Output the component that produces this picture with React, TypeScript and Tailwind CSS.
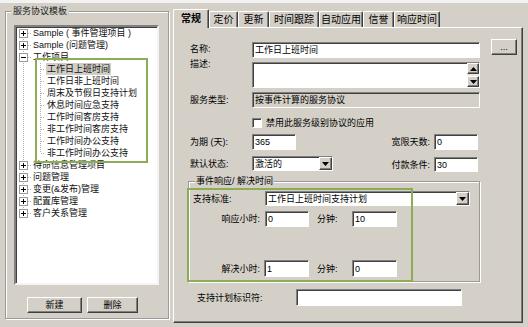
import React from "react";

const sunken =
  "border border-t-[#808080] border-l-[#808080] border-r-white border-b-white shadow-[inset_1px_1px_0_#404040]";
const raised =
  "border border-t-white border-l-white border-r-[#404040] border-b-[#404040] shadow-[inset_-1px_-1px_0_#808080]";
const etched = "border border-[#9a9a9a] shadow-[inset_1px_1px_0_#fff,1px_1px_0_#fff]";

function Field({ w, h, value = "", gray = false }: { w: number; h: number; value?: string; gray?: boolean }) {
  return (
    <div
      className={`${sunken} ${gray ? "bg-[#d4d0c8]" : "bg-white"} flex items-center pl-[2px] leading-[12px] overflow-hidden whitespace-nowrap`}
      style={{ width: w, height: h }}
    >
      {value}
    </div>
  );
}

function Arrow({ up = false }: { up?: boolean }) {
  return (
    <svg width="7" height="4" viewBox="0 0 7 4">
      <path d={up ? "M0 4 L3.5 0 L7 4 Z" : "M0 0 L7 0 L3.5 4 Z"} fill="#000" />
    </svg>
  );
}

function Select({ w, h, value }: { w: number; h: number; value: string }) {
  return (
    <div className={`${sunken} bg-white flex items-center`} style={{ width: w, height: h }}>
      <span className="pl-[2px] flex-1 leading-[12px] whitespace-nowrap overflow-hidden">{value}</span>
      <div className={`${raised} bg-[#d4d0c8] w-[13px] h-full flex items-center justify-center`}>
        <Arrow />
      </div>
    </div>
  );
}

type Node = { label: string; open?: boolean; children?: string[] };

const tree: Node[] = [
  { label: "Sample ( 事件管理项目 )" },
  { label: "Sample (问题管理)" },
  {
    label: "工作项目",
    open: true,
    children: [
      "工作日上班时间",
      "工作日非上班时间",
      "周末及节假日支持计划",
      "休息时间应急支持",
      "工作时间客房支持",
      "非工作时间客房支持",
      "工作时间办公支持",
      "非工作时间办公支持",
    ],
  },
  { label: "待命信息管理项目" },
  { label: "问题管理" },
  { label: "变更(&发布)管理" },
  { label: "配置库管理" },
  { label: "客户关系管理" },
];

const dot = { stroke: "#b0b0b0", strokeWidth: 1, strokeDasharray: "1 1" };

function RootLines({ first, last, open }: { first: boolean; last: boolean; open?: boolean }) {
  return (
    <svg width="17" height="12" viewBox="0 0 17 12" className="shrink-0">
      <line x1="7.5" y1={first ? 6 : 0} x2="7.5" y2={last ? 6 : 12} {...dot} />
      <line x1="12" y1="6.5" x2="16" y2="6.5" {...dot} />
      <rect x="3.5" y="2.5" width="8" height="8" fill="#fff" stroke="#9a9a9a" />
      <line x1="5" y1="6.5" x2="10" y2="6.5" stroke="#000" />
      {!open && <line x1="7.5" y1="4" x2="7.5" y2="9" stroke="#000" />}
    </svg>
  );
}

function ChildLines({ last }: { last: boolean }) {
  return (
    <svg width="30" height="12" viewBox="0 0 30 12" className="shrink-0">
      <line x1="7.5" y1="0" x2="7.5" y2="12" {...dot} />
      <line x1="24.5" y1="0" x2="24.5" y2={last ? 6 : 12} {...dot} />
      <line x1="25" y1="6.5" x2="29" y2="6.5" {...dot} />
    </svg>
  );
}

function Tree() {
  return (
    <div className="flex flex-col">
      {tree.map((n, i) => (
        <React.Fragment key={n.label}>
          <div className="flex items-center h-[12px]">
            <RootLines first={i === 0} last={i === tree.length - 1} open={n.open} />
            <span className="leading-[12px] whitespace-nowrap text-[#111]">{n.label}</span>
          </div>
          {n.children?.map((c, j) => (
            <div key={c} className="flex items-center h-[12px]">
              <ChildLines last={j === n.children!.length - 1} />
              <span className={`leading-[12px] whitespace-nowrap px-[1px] text-[#111] ${j === 0 ? "bg-[#d0cdc6]" : ""}`}>
                {c}
              </span>
            </div>
          ))}
        </React.Fragment>
      ))}
    </div>
  );
}

const tabs = [
  { label: "常规", w: 36 },
  { label: "定价", w: 29 },
  { label: "更新", w: 31 },
  { label: "时间跟踪", w: 50 },
  { label: "自动应用", w: 44 },
  { label: "信誉", w: 31 },
  { label: "响应时间", w: 46 },
];

export default function App() {
  return (
    <div className="w-[528px] h-[327px] bg-[#d4d0c8] text-[9px] text-black relative overflow-hidden font-[family-name:'Liberation_Sans','Noto_Sans_CJK_SC',sans-serif]">
      <div className="h-[3px] bg-[#f2f2f2]" />
      <div className="flex">
        {/* left: template tree */}
        <div className={`relative ml-[5px] mt-[8px] w-[164px] h-[308px] ${etched}`}>
          <span className="absolute -top-[7px] left-[5px] px-[2px] bg-[#d4d0c8] leading-[12px] text-[#222]">服务协议模板</span>
          <div className="ml-[8px] mt-[13px] w-[145px] h-[260px] bg-white border-2 border-t-[#808080] border-l-[#808080] border-r-[#f4f4f4] border-b-[#f4f4f4] shadow-[inset_1px_1px_0_#404040] overflow-hidden">
            <Tree />
          </div>
          <div className="flex ml-[21px] mt-[12px] gap-[5px]">
            <button className={`${raised} bg-[#d4d0c8] w-[55px] h-[16px] leading-[12px] text-[9px]`}>新建</button>
            <button className={`${raised} bg-[#d4d0c8] w-[51px] h-[16px] leading-[12px] text-[9px]`}>删除</button>
          </div>
        </div>

        {/* right: tabs */}
        <div className="ml-[4px] mt-[6px] w-[350px]">
          <div className="flex items-start h-[18px] text-[10px]">
            {tabs.map((t, i) => (
              <div
                key={t.label}
                className={`flex items-center justify-center leading-[12px] rounded-t-[2px] border-t border-l border-r border-t-white border-l-white border-r-[#404040] shadow-[inset_-1px_0_0_#808080] bg-[#d4d0c8] ${
                  i === 0 ? "h-[19px] relative z-10 font-semibold" : "h-[16px] mt-[2px]"
                }`}
                style={{ width: t.w }}
              >
                {t.label}
              </div>
            ))}
          </div>
          <div className={`relative h-[296px] ${raised} bg-[#d4d0c8] pl-[16px] flex flex-col`}>
            {/* 名称 */}
            <div className="flex items-start mt-[11px] h-[19px]">
              <span className="w-[62px] mt-[4px] leading-[12px]">名称:</span>
              <div className="mt-[3px]">
                <Field w={228} h={16} value="工作日上班时间" />
              </div>
              <button className={`${raised} bg-[#d4d0c8] ml-[11px] w-[26px] h-[16px] leading-[10px] text-[9px]`}>...</button>
            </div>
            {/* 描述 */}
            <div className="flex items-start -mt-[1px] h-[31px]">
              <span className="w-[62px] mt-[1px] leading-[12px]">描述:</span>
              <div className={`${sunken} bg-white mt-[5px] w-[228px] h-[26px] flex justify-end`}>
                <div className="w-[12px] h-full flex flex-col">
                  <div className={`${raised} bg-[#d4d0c8] h-[11px] flex items-center justify-center`}>
                    <Arrow up />
                  </div>
                  <div className="flex-1 bg-[#ece9e4]" />
                  <div className={`${raised} bg-[#d4d0c8] h-[11px] flex items-center justify-center`}>
                    <Arrow />
                  </div>
                </div>
              </div>
            </div>
            {/* 服务类型 */}
            <div className="flex items-center mt-[4px] h-[16px]">
              <span className="w-[62px] leading-[12px]">服务类型:</span>
              <Field w={228} h={16} value="按事件计算的服务协议" gray />
            </div>
            {/* checkbox */}
            <div className="flex items-center mt-[10px] h-[10px] pl-[62px]">
              <div className={`${sunken} bg-white w-[10px] h-[10px]`} />
              <span className="ml-[4px] leading-[12px]">禁用此服务级别协议的应用</span>
            </div>
            {/* 为期 */}
            <div className="flex items-center mt-[6px] h-[16px]">
              <span className="w-[62px] leading-[12px]">为期 (天):</span>
              <Field w={44} h={16} value="365" />
              <span className="w-[134px] text-right leading-[12px]">宽限天数:</span>
              <div className="ml-[4px]">
                <Field w={44} h={16} value="0" />
              </div>
            </div>
            {/* 默认状态 */}
            <div className="flex items-start mt-[6px] h-[16px]">
              <span className="w-[62px] mt-[2px] leading-[12px]">默认状态:</span>
              <Select w={81} h={15} value="激活的" />
              <span className="w-[97px] mt-[3px] text-right leading-[12px]">付款条件:</span>
              <div className="ml-[4px] mt-[1px]">
                <Field w={44} h={15} value="30" />
              </div>
            </div>
            {/* 事件响应 group */}
            <div className={`relative -ml-[2px] mt-[9px] w-[292px] h-[101px] ${etched} flex flex-col`}>
              <span className="absolute -top-[7px] left-[6px] px-[1px] bg-[#d4d0c8] leading-[12px]">事件响应/ 解决时间</span>
              <div className="flex items-center mt-[9px] h-[15px] ml-[4px]">
                <span className="w-[72px] leading-[12px]">支持标准:</span>
                <Select w={205} h={15} value="工作日上班时间支持计划" />
              </div>
              <div className="flex items-center mt-[5px] h-[16px] ml-[4px]">
                <span className="w-[67px] text-right leading-[12px]">响应小时:</span>
                <div className="ml-[5px]">
                  <Field w={44} h={16} value="0" />
                </div>
                <span className="ml-[8px] w-[35px] leading-[12px]">分钟:</span>
                <Field w={45} h={16} value="10" />
              </div>
              <div className="flex items-center mt-[33px] h-[17px] ml-[4px]">
                <span className="w-[67px] text-right leading-[12px]">解决小时:</span>
                <div className="ml-[4px]">
                  <Field w={45} h={17} value="1" />
                </div>
                <span className="ml-[8px] w-[35px] leading-[12px]">分钟:</span>
                <Field w={45} h={17} value="0" />
              </div>
            </div>
            {/* 支持计划标识符 */}
            <div className="flex items-center mt-[7px] h-[17px]">
              <span className="ml-[7px] w-[99px] leading-[12px]">支持计划标识符:</span>
              <Field w={166} h={17} />
            </div>
          </div>
        </div>
      </div>

      {/* green highlight annotations */}
      <div className="absolute left-[35px] top-[58px] w-[113px] h-[105px] border-2 border-[#8aad55] pointer-events-none" />
      <div className="absolute left-[187px] top-[188px] w-[226px] h-[94px] border-2 border-[#8aad55] pointer-events-none" />
    </div>
  );
}
